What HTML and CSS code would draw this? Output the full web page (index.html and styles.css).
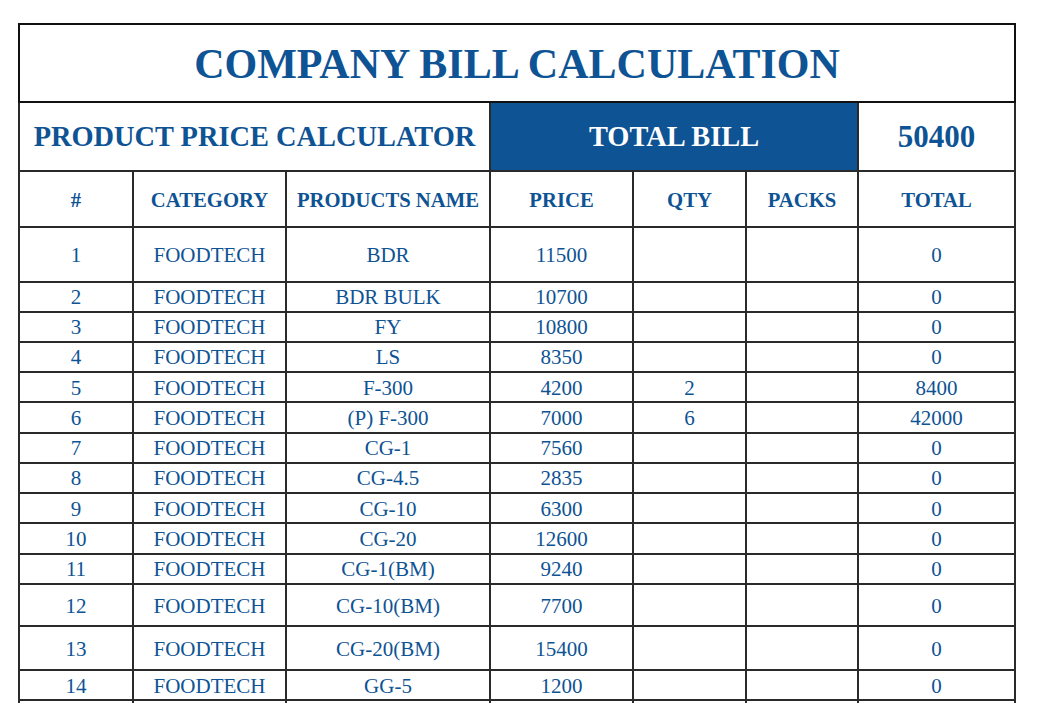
FILE: index.html
```html
<!DOCTYPE html>
<html lang="en">
<head>
<meta charset="utf-8">
<title>Company Bill Calculation</title>
<link rel="stylesheet" href="styles.css">
</head>
<body>
<table class="bill">
  <colgroup>
    <col class="c-num">
    <col class="c-cat">
    <col class="c-name">
    <col class="c-price">
    <col class="c-qty">
    <col class="c-packs">
    <col class="c-total">
  </colgroup>
  <tr class="r-title">
    <td colspan="7" class="title">COMPANY BILL CALCULATION</td>
  </tr>
  <tr class="r-sub">
    <td colspan="3" class="subtitle">PRODUCT PRICE CALCULATOR</td>
    <td colspan="3" class="total-label">TOTAL BILL</td>
    <td class="total-value">50400</td>
  </tr>
  <tr class="r-head">
    <th>#</th>
    <th>CATEGORY</th>
    <th>PRODUCTS NAME</th>
    <th>PRICE</th>
    <th>QTY</th>
    <th>PACKS</th>
    <th>TOTAL</th>
  </tr>
  <tr class="r-tall"><td>1</td><td>FOODTECH</td><td>BDR</td><td>11500</td><td></td><td></td><td>0</td></tr>
  <tr class="r-first"><td>2</td><td>FOODTECH</td><td>BDR BULK</td><td>10700</td><td></td><td></td><td>0</td></tr>
  <tr class="r-std"><td>3</td><td>FOODTECH</td><td>FY</td><td>10800</td><td></td><td></td><td>0</td></tr>
  <tr class="r-std"><td>4</td><td>FOODTECH</td><td>LS</td><td>8350</td><td></td><td></td><td>0</td></tr>
  <tr class="r-std"><td>5</td><td>FOODTECH</td><td>F-300</td><td>4200</td><td>2</td><td></td><td>8400</td></tr>
  <tr class="r-std"><td>6</td><td>FOODTECH</td><td>(P) F-300</td><td>7000</td><td>6</td><td></td><td>42000</td></tr>
  <tr class="r-std"><td>7</td><td>FOODTECH</td><td>CG-1</td><td>7560</td><td></td><td></td><td>0</td></tr>
  <tr class="r-std"><td>8</td><td>FOODTECH</td><td>CG-4.5</td><td>2835</td><td></td><td></td><td>0</td></tr>
  <tr class="r-std"><td>9</td><td>FOODTECH</td><td>CG-10</td><td>6300</td><td></td><td></td><td>0</td></tr>
  <tr class="r-std"><td>10</td><td>FOODTECH</td><td>CG-20</td><td>12600</td><td></td><td></td><td>0</td></tr>
  <tr class="r-std"><td>11</td><td>FOODTECH</td><td>CG-1(BM)</td><td>9240</td><td></td><td></td><td>0</td></tr>
  <tr class="r-12"><td>12</td><td>FOODTECH</td><td>CG-10(BM)</td><td>7700</td><td></td><td></td><td>0</td></tr>
  <tr class="r-13"><td>13</td><td>FOODTECH</td><td>CG-20(BM)</td><td>15400</td><td></td><td></td><td>0</td></tr>
  <tr class="r-first"><td>14</td><td>FOODTECH</td><td>GG-5</td><td>1200</td><td></td><td></td><td>0</td></tr>
  <tr class="r-std"><td></td><td></td><td></td><td></td><td></td><td></td><td></td></tr>
</table>
</body>
</html>
```

FILE: styles.css
```css
html, body {
  margin: 0;
  padding: 0;
  background: #ffffff;
}

body {
  padding: 23px 0 0 18px;
  font-family: "Liberation Serif", "Times New Roman", serif;
  color: #0e5394;
}

.bill {
  border-collapse: collapse;
  table-layout: fixed;
  width: 998px;
}

.c-num { width: 114px; }
.c-cat { width: 153px; }
.c-name { width: 204px; }
.c-price { width: 143px; }
.c-qty { width: 113px; }
.c-packs { width: 112px; }
.c-total { width: 157px; }

.bill td,
.bill th {
  border: 2px solid #2a2a2a;
  padding: 1px 0 0 0;
  text-align: center;
  vertical-align: middle;
  font-size: 21px;
  line-height: 24px;
  font-weight: normal;
  color: #0e5394;
  white-space: nowrap;
  overflow: hidden;
}

.bill .title {
  border: 2px solid #111111;
  font-size: 42px;
  font-weight: bold;
  line-height: 48px;
}

.bill .subtitle,
.bill .total-label {
  font-size: 28.4px;
  font-weight: bold;
  line-height: 32px;
}

.bill .total-label {
  background: #0e5394;
  color: #ffffff;
}

.bill .total-value {
  font-size: 31px;
  font-weight: bold;
  line-height: 34px;
}

.bill th {
  font-size: 20.7px;
  font-weight: bold;
}

.r-title { height: 78px; }
.r-sub { height: 69px; }
.r-head { height: 56px; }
.r-tall { height: 55px; }
.r-first { height: 29.5px; }
.r-std { height: 30.25px; }
.r-12 { height: 42.7px; }
.r-13 { height: 44px; }
```
